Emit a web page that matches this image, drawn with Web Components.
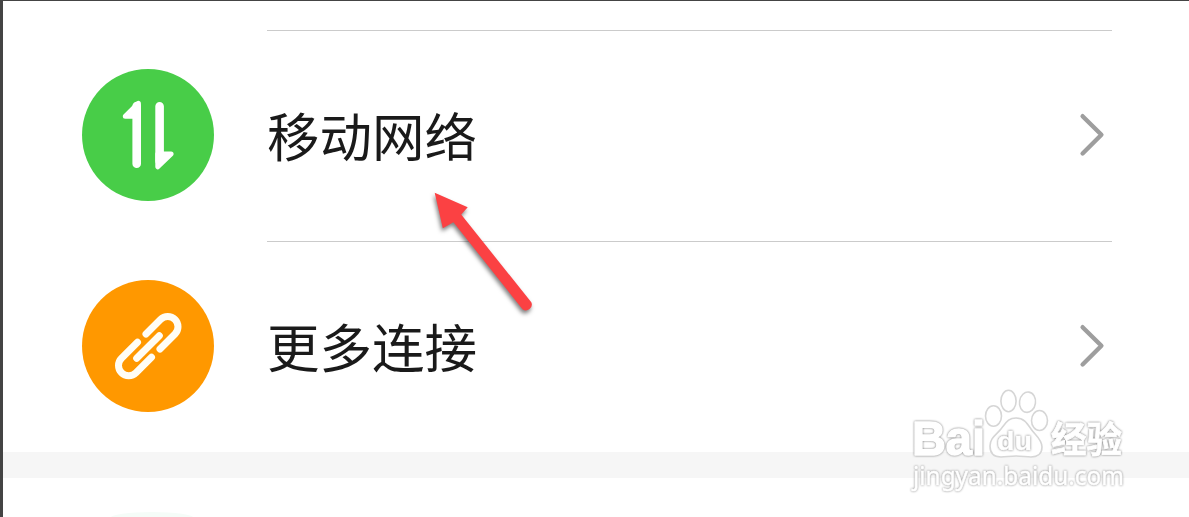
<!DOCTYPE html>
<html lang="zh-CN">
<head>
<meta charset="utf-8">
<title>设置</title>
<style>
    html, body {
        margin: 0;
        height: 100%;
        overflow: hidden;
    }
    body {
        font-family: "Noto Sans CJK SC", sans-serif;
        color: #1a1a1a;
        background: #fff;
    }
</style>
</head>
<body>
<settings-screen>
    <settings-row label="移动网络">
        <mobile-icon slot="icon"></mobile-icon>
    </settings-row>
    <settings-row label="更多连接">
        <link-icon slot="icon"></link-icon>
    </settings-row>
    <section-gap></section-gap>
    <next-section></next-section>
    <pointer-arrow slot="overlay"></pointer-arrow>
    <site-watermark slot="overlay"></site-watermark>
</settings-screen>

<script>
    function component(name, html) {
        const template = document.createElement('template');
        template.innerHTML = html;
        window.customElements.define(name, class extends HTMLElement {
            constructor(){
                super();
                this.attachShadow({mode:'open'}).appendChild(template.content.cloneNode(true));
                const label = this.shadowRoot.querySelector(".label");
                if (label) label.textContent = this.getAttribute("label");
            }
        });
    }

    component('settings-screen', `
        <style>
            :host {
                display: flex;
                flex-direction: column;
                box-sizing: border-box;
                position: relative;
                height: 517px;
                padding-top: 28px;
                border-top: 1px solid #444;
                border-left: 3px solid #444;
                overflow: hidden;
            }
        </style>
        <slot></slot>
        <slot name="overlay"></slot>
    `);

    component('settings-row', `
        <style>
            :host {
                display: flex;
                flex: none;
                align-items: center;
                box-sizing: border-box;
                height: 211px;
                padding: 0 77px 0 79px;
                gap: 53px;
            }
            .body {
                display: flex;
                flex: 1;
                align-self: stretch;
                align-items: center;
                justify-content: space-between;
                box-sizing: border-box;
                margin-top: 1px;
                padding: 0 6px 1px 0;
                border-top: 1px solid #cbcbcb;
            }
            .label {
                font-size: 52.5px;
                line-height: 76px;
                padding-bottom: 3px;
            }
            svg {
                display: block;
            }
        </style>
        <slot name="icon"></slot>
        <div class="body">
            <span class="label"></span>
            <svg width="28" height="46" viewBox="0 0 28 46" fill="none" stroke="#9e9e9e" stroke-width="4.4" stroke-linecap="round" stroke-linejoin="round">
                <path d="M4.6 4.2 23.4 22.7 4.6 41.5"/>
            </svg>
        </div>
    `);

    const iconStyle = `
        <style>
            :host {
                display: block;
                width: 132px;
                height: 132px;
                border-radius: 50%;
                background: var(--fill);
            }
            svg {
                display: block;
            }
        </style>
    `;

    component('mobile-icon', `
        ${iconStyle}
        <style>:host { --fill: #48cd48; }</style>
        <svg width="132" height="132" viewBox="0 0 132 132" fill="#fff" stroke="#fff" stroke-linecap="round" stroke-linejoin="round">
            <path stroke-width="8.6" d="M54.7 37V94.8M77.6 37.3V92"/>
            <path stroke-width="5" d="M56.4 34.3V47.3H43.3Z"/>
            <path stroke-width="5" d="M75.8 85H89.1L75.8 97.8Z"/>
        </svg>
    `);

    component('link-icon', `
        ${iconStyle}
        <style>:host { --fill: #ff9800; }</style>
        <svg width="132" height="132" viewBox="0 0 132 132" fill="none" stroke="#fffdf5" stroke-width="7" stroke-linecap="round">
            <path d="M64 54 78.5 39.5A10.25 10.25 0 0 1 93 54L78 69"/>
            <path d="M55.5 62.3 39.5 78.3A10.25 10.25 0 0 0 54 92.8L69.5 77.3"/>
            <path d="M54.7 78.3 77.3 55.7"/>
        </svg>
    `);

    component('section-gap', `
        <style>
            :host {
                display: block;
                flex: none;
                height: 26px;
                margin-top: 1px;
                background: #f6f6f6;
            }
        </style>
    `);

    /* only the very top of the following icon is in view */
    component('next-section', `
        <style>
            :host {
                display: block;
                flex: 1;
                padding: 34px 0 0 107px;
            }
            div {
                width: 84px;
                height: 12px;
                border-radius: 50%;
                background: #f5fcf8;
            }
        </style>
        <div></div>
    `);

    component('pointer-arrow', `
        <style>
            :host {
                position: absolute;
                left: 417px;
                top: 179px;
                width: 130px;
                height: 145px;
            }
            svg {
                display: block;
                filter: drop-shadow(-1px 3px 2px rgba(0, 0, 0, .5));
            }
        </style>
        <svg width="130" height="145" viewBox="0 0 130 145" fill="#fb4143">
            <path d="M14.7 12.7 47.7 27.3 41.2 34.5 111.3 122.3A5.8 5.8 0 0 1 102.5 129.2L33.4 42.3 22.8 48.3Z"/>
        </svg>
    `);

    component('site-watermark', `
        <style>
            :host {
                position: absolute;
                left: 892px;
                top: 379px;
                width: 250px;
                height: 120px;
            }
            svg {
                display: block;
            }
            text {
                fill: #fff;
                stroke: #fff;
                stroke-width: .8px;
                stroke-linejoin: round;
                filter: drop-shadow(0 0 .9px #777);
            }
            .paw {
                fill: #fff;
                stroke: #d6d6d6;
                stroke-width: 1.6px;
            }
            .latin {
                font-family: "Liberation Sans", sans-serif;
                font-weight: bold;
            }
            .url {
                font-family: "Noto Sans", "Open Sans", sans-serif;
                stroke-width: .5px;
                filter: drop-shadow(0 0 .9px #888);
            }
        </style>
        <svg width="250" height="120" viewBox="0 0 250 120">
            <text class="latin" x="17" y="75.3" font-size="48.5" style="stroke-width: 1.6px" textLength="73" lengthAdjust="spacingAndGlyphs">Bai</text>
            <g class="paw">
                <ellipse cx="98.5" cy="36" rx="8" ry="10.2"/>
                <ellipse cx="113.5" cy="21" rx="7.6" ry="10.7"/>
                <ellipse cx="132.5" cy="22.2" rx="8" ry="10.2" transform="rotate(8 132.5 22.2)"/>
                <ellipse cx="144.5" cy="40.5" rx="8" ry="10"/>
                <path d="M121 38C129 38 132 43 136 49C140 55 147 59 147 67C147 74 142 77 136 77C131 77 127 76 121 76C115 76 111 77 106 77C99 77 95 73 95 66C95 58 101 55 106 49C111 43 113 38 121 38Z"/>
            </g>
            <text class="latin" x="102" y="70" font-size="26" style="stroke-width: .4px" textLength="35" lengthAdjust="spacingAndGlyphs">du</text>
            <text x="156" y="73" font-size="36" font-weight="bold" font-family="Noto Sans CJK SC, sans-serif" textLength="71" lengthAdjust="spacingAndGlyphs">经验</text>
            <text class="url" x="18" y="104.5" font-size="26" textLength="211" lengthAdjust="spacingAndGlyphs">jingyan.baidu.com</text>
        </svg>
    `);
</script>
</body>
</html>
